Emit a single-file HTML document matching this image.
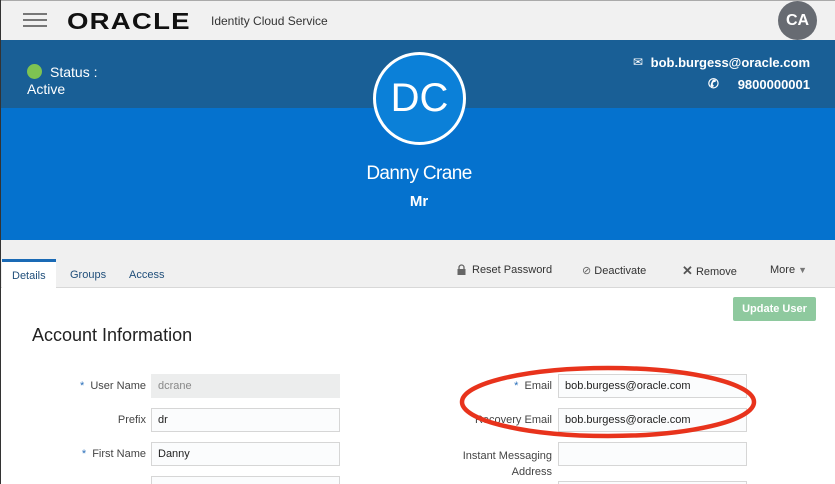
<!DOCTYPE html>
<html style="width:835px;height:484px;overflow:hidden"><head><meta charset="utf-8"><style>
*{margin:0;padding:0;box-sizing:border-box}
body{width:835px;height:484px;overflow:hidden;font-family:"Liberation Sans",sans-serif;background:#fff;position:relative;border-left:1px solid #333}
.a{position:absolute}
.hdr{left:0;top:0;width:835px;height:40px;background:#f1f1f1;border-top:1px solid #aaa}
.dark{left:0;top:40px;width:835px;height:68px;background:#195f96}
.blue{left:0;top:108px;width:835px;height:132px;background:#0572ce}
.tabs{left:0;top:240px;width:835px;height:48px;background:#f0f0f0;border-bottom:1px solid #d8d8d8}
.lbl{font-size:11px;color:#444;text-align:right;width:120px}
.in{height:24px;border:1px solid #d6d6d6;background:#fbfcfd;font-size:11px;color:#222;padding:5px 6px}
.st{color:#2a6fba}
</style></head><body>
<div class="a hdr"></div>
<div class="a" style="left:22px;top:13px;width:24px;height:2px;background:#777"></div>
<div class="a" style="left:22px;top:19px;width:24px;height:2px;background:#777"></div>
<div class="a" style="left:22px;top:25px;width:24px;height:2px;background:#777"></div>
<div class="a" style="left:66px;top:8px;font-size:23px;font-weight:bold;letter-spacing:1px;color:#111;transform:scaleX(1.2);transform-origin:left">ORACLE</div>
<div class="a" style="left:210px;top:14px;font-size:12px;color:#333">Identity Cloud Service</div>
<div class="a" style="left:777px;top:1px;width:39px;height:39px;border-radius:50%;background:#676b72;color:#fff;font-weight:bold;font-size:16px;text-align:center;line-height:39px">CA</div>
<div class="a dark"></div>
<div class="a blue"></div>
<div class="a" style="left:26px;top:64px;width:15px;height:15px;border-radius:50%;background:#7ec352"></div>
<div class="a" style="left:49px;top:64px;font-size:14px;color:#fff">Status :</div>
<div class="a" style="left:26px;top:81px;font-size:14px;color:#fff">Active</div>
<div class="a" style="left:632px;top:55px;font-size:12px;color:#fff">✉</div>
<div class="a" style="right:25px;top:55px;font-size:13px;color:#fff;font-weight:bold">bob.burgess@oracle.com</div>
<div class="a" style="left:707px;top:76px;font-size:13px;color:#fff;font-weight:bold">✆</div>
<div class="a" style="right:25px;top:77px;font-size:13px;color:#fff;font-weight:bold">9800000001</div>
<div class="a" style="left:372px;top:52px;width:93px;height:93px;border-radius:50%;border:3px solid #fff;background:#0b80d8;color:#fff;font-size:40px;text-align:center;line-height:86px">DC</div>
<div class="a" style="left:300px;top:163px;width:236px;text-align:center;font-size:19px;color:#fff;letter-spacing:-0.6px">Danny Crane</div>
<div class="a" style="left:300px;top:193px;width:236px;text-align:center;font-size:15px;color:#fff;font-weight:bold">Mr</div>
<div class="a tabs"></div>
<div class="a" style="left:1px;top:259px;width:54px;height:30px;background:#fff;border-top:3px solid #1a6ab5;font-size:11px;color:#1f4e7a;padding:8px 0 0 10px">Details</div>
<div class="a" style="left:69px;top:269px;font-size:11px;color:#1f4e7a">Groups</div>
<div class="a" style="left:128px;top:269px;font-size:11px;color:#1f4e7a">Access</div>
<svg class="a" style="left:456px;top:264px" width="9" height="11"><path d="M2 5V3.5a2.5 2.5 0 0 1 5 0V5" fill="none" stroke="#666" stroke-width="1.3"/><rect x="0.5" y="5" width="8" height="6" fill="#666"/></svg>
<div class="a" style="left:471px;top:264px;font-size:11px;color:#333">Reset Password</div>
<div class="a" style="left:581px;top:264px;font-size:11px;color:#333"><span style="color:#666">⊘</span> Deactivate</div>
<div class="a" style="left:681px;top:263px;font-size:11px;color:#333"><b style="color:#555;font-size:13px">✕</b> Remove</div>
<div class="a" style="left:769px;top:264px;font-size:11px;color:#333">More <span style="color:#777;font-size:9px">▼</span></div>
<div class="a" style="left:732px;top:297px;width:83px;height:24px;background:#8ec99e;border-radius:2px;color:#fff;font-weight:bold;font-size:11px;text-align:center;line-height:24px">Update User</div>
<div class="a" style="left:31px;top:325px;font-size:18px;color:#222">Account Information</div>
<div class="a lbl" style="left:25px;top:380px"><span class="st">*</span>&nbsp; User Name</div>
<div class="a in" style="left:150px;top:374px;width:189px;background:#eceded;border-color:#eceded;color:#888">dcrane</div>
<div class="a lbl" style="left:25px;top:414px">Prefix</div>
<div class="a in" style="left:150px;top:408px;width:189px">dr</div>
<div class="a lbl" style="left:25px;top:448px"><span class="st">*</span>&nbsp; First Name</div>
<div class="a in" style="left:150px;top:442px;width:189px">Danny</div>
<div class="a in" style="left:150px;top:476px;width:189px"></div>
<div class="a lbl" style="left:431px;top:380px"><span class="st">*</span>&nbsp; Email</div>
<div class="a in" style="left:557px;top:374px;width:189px">bob.burgess@oracle.com</div>
<div class="a lbl" style="left:431px;top:414px">Recovery Email</div>
<div class="a in" style="left:557px;top:408px;width:189px">bob.burgess@oracle.com</div>
<div class="a lbl" style="left:431px;top:448px;line-height:16px">Instant Messaging<br>Address</div>
<div class="a in" style="left:557px;top:442px;width:189px"></div>
<div class="a in" style="left:557px;top:481px;width:189px"></div>
<svg class="a" style="left:455px;top:360px" width="305" height="85"><ellipse cx="152" cy="42" rx="146" ry="34" fill="none" stroke="#e8331c" stroke-width="4.5"/></svg>
</body></html>
